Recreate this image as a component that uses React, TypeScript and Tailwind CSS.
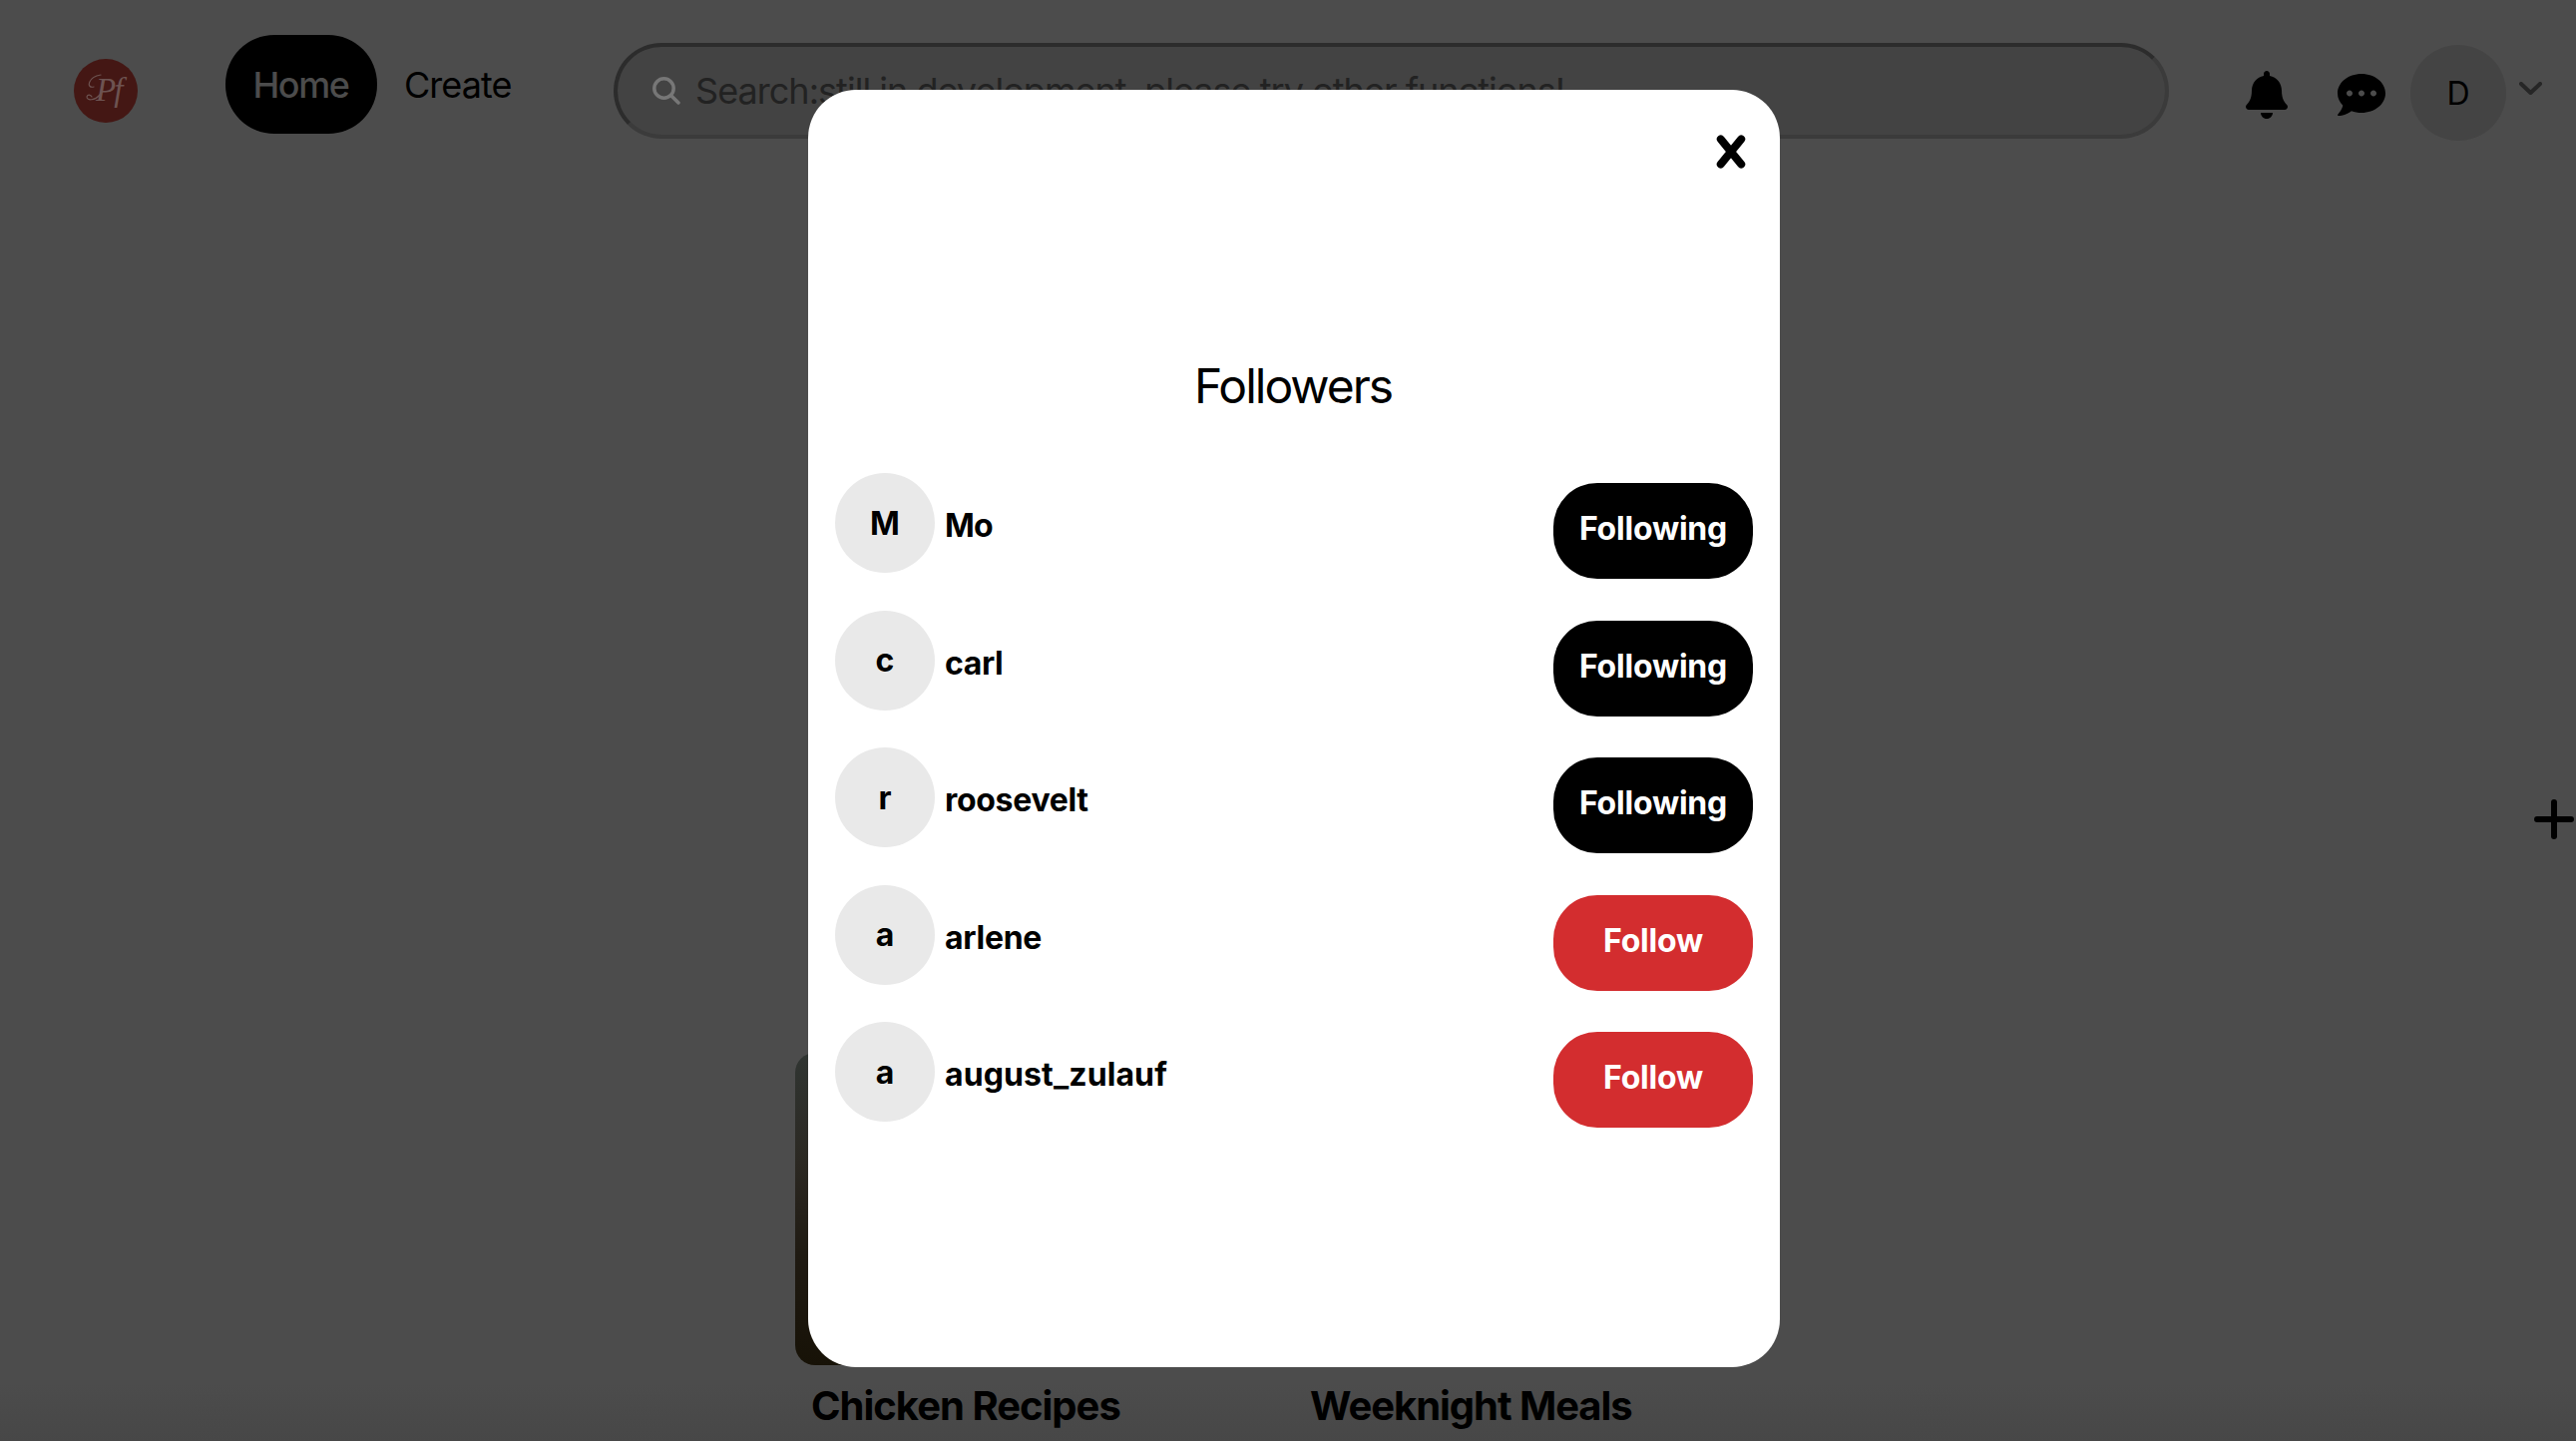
import React from "react";
import { FaBell, FaCommentDots } from "react-icons/fa";

const followers = [
  { name: "Mo", following: true, tracking: "tracking-[-0.8px]" },
  { name: "carl", following: true, tracking: "tracking-[-0.4px]" },
  { name: "roosevelt", following: true, tracking: "tracking-[-0.3px]" },
  { name: "arlene", following: false, tracking: "tracking-[-0.3px]" },
  { name: "august_zulauf", following: false, tracking: "tracking-[0.1px]" },
];

function Logo() {
  return (
    <div className="relative mt-[59px] ml-[74px] h-16 w-16 shrink-0 rounded-full bg-[#441714]">
      <span className="absolute top-[11px] left-[22px] font-['Liberation_Serif',serif] text-[33px] leading-10 tracking-[-2px] text-[#6d5351] italic">
        Pf
      </span>
      <svg className="absolute inset-0" viewBox="0 0 64 64" fill="none" stroke="#6d5351" strokeWidth="1.2" strokeLinecap="round">
        <path d="M20 28C12 30 14 18 27 16M26 36C21 42 13 42 13 38C14 35 17 36 18 38" />
      </svg>
    </div>
  );
}

function Header() {
  return (
    <header className="flex h-[150px] items-start">
      <Logo />
      <button className="mt-[35px] ml-[88px] h-[99px] w-[152px] rounded-[49px] bg-black pr-px text-[36px] font-medium tracking-[-1.4px] text-[#4c4c4c]">
        Home
      </button>
      <span className="mt-[58px] ml-[27px] w-[110px] text-[36px] leading-[54px] tracking-[-0.95px] whitespace-nowrap">
        Create
      </span>
      <div className="mt-[43px] ml-[100px] flex h-24 w-[1559px] items-center rounded-full border-4 border-t-[#2c2c2c] border-r-[#3b3b3b] border-b-[#3b3b3b] border-l-[#2c2c2c] bg-[#434343] pl-[35px]">
        <svg className="h-7 w-7 shrink-0" viewBox="0 0 28 28" fill="none" stroke="#777" strokeWidth="3.5" strokeLinecap="round">
          <circle cx="11.5" cy="11.5" r="9.7" />
          <path d="M18.7 18.7L26 26" />
        </svg>
        <span className="ml-[15px] text-[36px] tracking-[-0.97px] whitespace-nowrap text-[#222]">
          Search:still in development, please try other functions!
        </span>
      </div>
      <FaBell className="mt-[71px] ml-[77px] h-12 w-[42px] shrink-0" />
      <FaCommentDots className="mt-[71px] ml-[50px] h-12 w-12 shrink-0" />
      <div className="mt-[45px] ml-[25px] flex h-24 w-24 shrink-0 items-center justify-center rounded-full bg-[#444] pt-[2px] text-[32px]">
        D
      </div>
      <svg
        className="mt-[82px] ml-[13px] h-[13px] w-[23px] shrink-0"
        viewBox="0 0 23 13"
        fill="none"
        stroke="#262626"
        strokeWidth="4"
        strokeLinecap="round"
        strokeLinejoin="round"
      >
        <path d="M2 2L11.5 11L21 2" />
      </svg>
    </header>
  );
}

function Boards() {
  return (
    <section className="mt-[213px] ml-[797px] flex gap-[10px]">
      <div className="w-[490px]">
        <div className="h-[313px] rounded-[20px] bg-[linear-gradient(180deg,#303532_0%,#2b2822_35%,#1f1a12_65%,#171207_100%)]" />
        <h2 className="mt-[11px] pl-4 text-[40px] leading-[60px] font-bold tracking-[-1px]">Chicken Recipes</h2>
      </div>
      <div className="w-[490px]">
        <div className="h-[313px]" />
        <h2 className="mt-[11px] pl-4 text-[40px] leading-[60px] font-bold tracking-[-1.05px]">Weeknight Meals</h2>
      </div>
    </section>
  );
}

function FollowersModal() {
  return (
    <div className="absolute top-[90px] left-[810px] flex h-[1280px] w-[974px] flex-col rounded-[48px] bg-white px-[27px]">
      <button className="mt-[45px] mr-[7px] self-end">
        <svg className="block h-[34px] w-[30px]" viewBox="0 0 30 34" stroke="#000" strokeWidth="8" strokeLinecap="round">
          <path d="M4.8 4.4L25.2 29.6M25.2 4.4L4.8 29.6" />
        </svg>
      </button>
      <h1 className="mt-[182px] pr-[2px] text-center text-[48px] leading-[72px] tracking-[-2px]">Followers</h1>
      <ul className="mt-[51px] flex flex-col">
        {followers.map((f) => (
          <li key={f.name} className="flex h-[137.5px] items-start text-[32px] leading-[48px] font-bold">
            <span className="flex h-[100px] w-[100px] items-center justify-center rounded-full bg-[#e9e9e9] pt-px">{f.name[0]}</span>
            <span className={`mt-[29px] ml-[10px] ${f.tracking}`}>{f.name}</span>
            <button
              className={`mt-[10px] ml-auto h-24 w-[200px] rounded-[44px] pb-1 tracking-[-0.2px] text-white ${f.following ? "bg-black" : "bg-[#d32d2f]"}`}
            >
              {f.following ? "Following" : "Follow"}
            </button>
          </li>
        ))}
      </ul>
    </div>
  );
}

export default function App() {
  return (
    <main className="relative flex h-[1444px] w-[2582px] flex-col overflow-hidden bg-[#4c4c4c] bg-[linear-gradient(180deg,#4c4c4c_96%,#474747_100%)] font-['Inter',sans-serif] text-black">
      <Header />
      <svg className="mt-[650px] mr-px h-[42px] w-[42px] shrink-0 self-end" viewBox="0 0 42 42" stroke="#000" strokeWidth="6" strokeLinecap="round">
        <path d="M21 4V38M4 21H38" />
      </svg>
      <Boards />
      <FollowersModal />
    </main>
  );
}
